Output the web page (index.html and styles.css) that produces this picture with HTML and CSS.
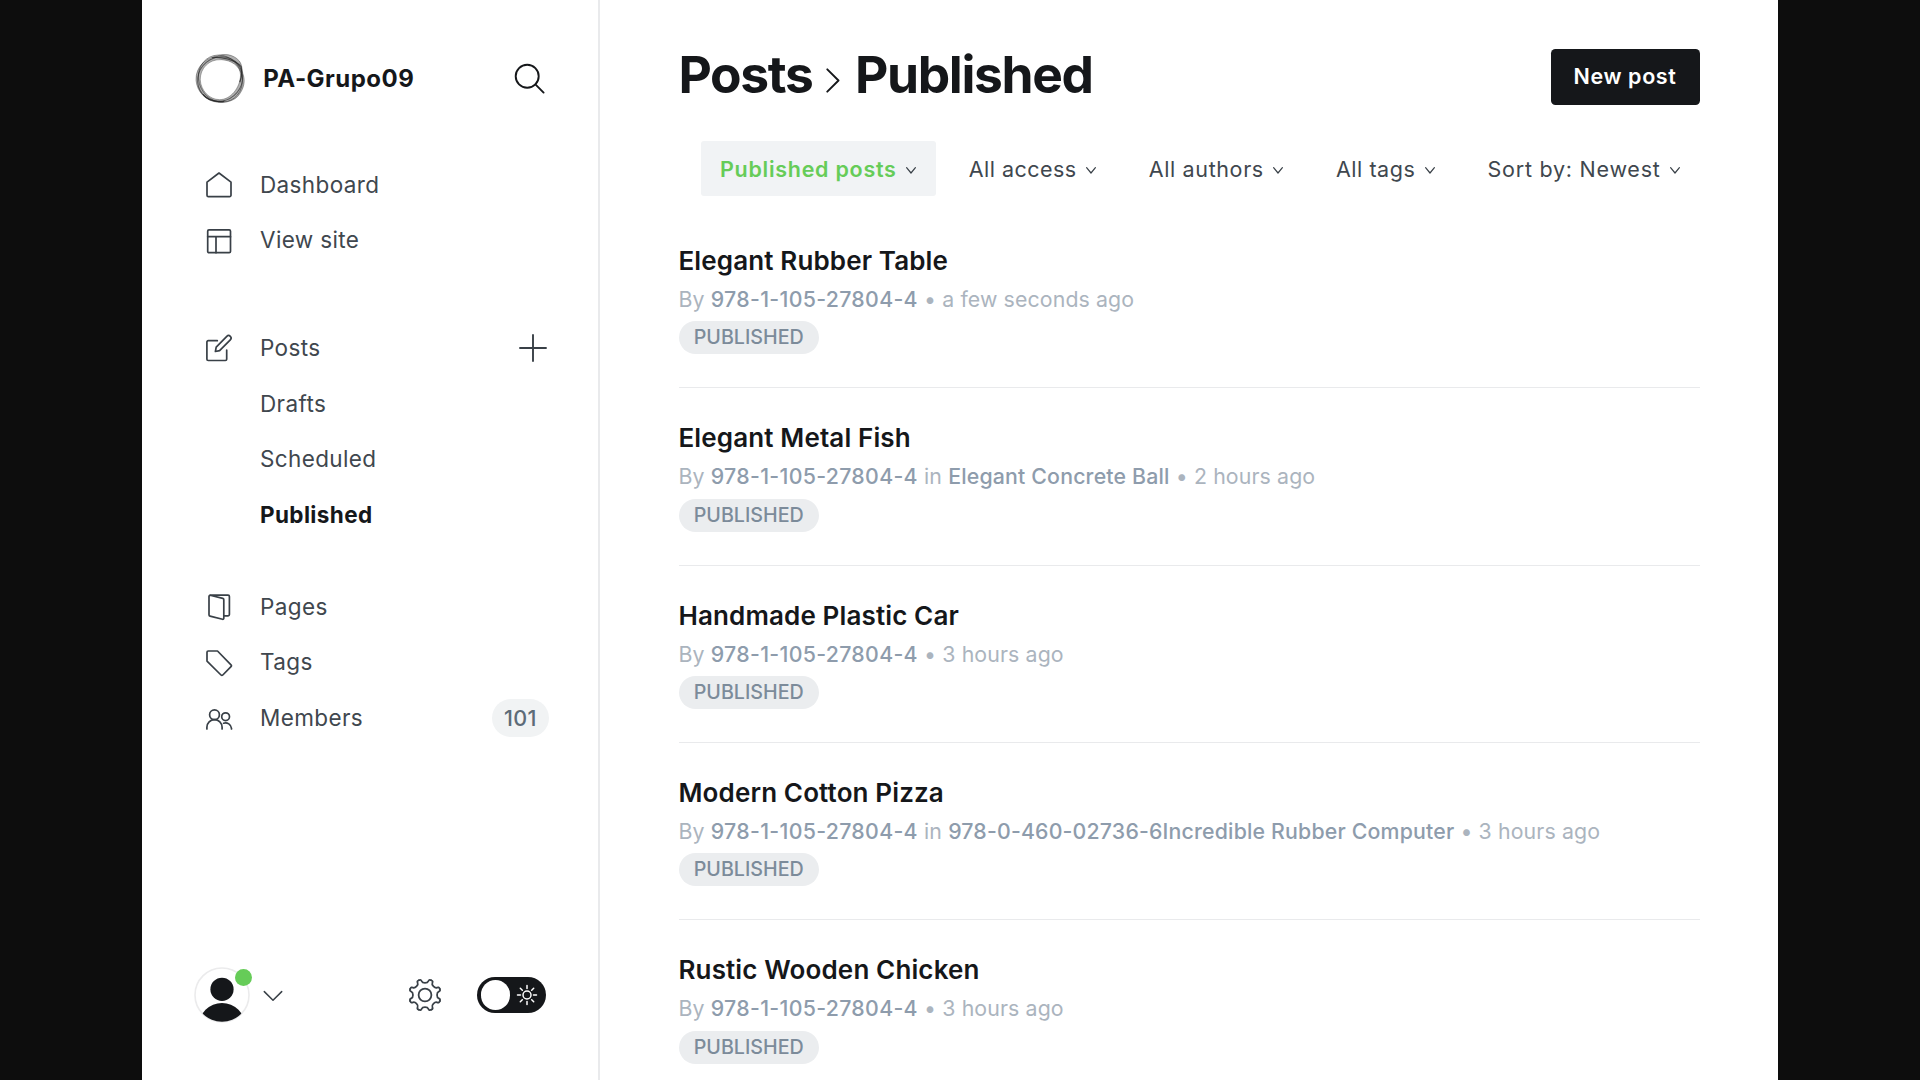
FILE: index.html
```html
<!DOCTYPE html>
<html lang="en">
<head>
<meta charset="utf-8">
<title>Posts - PA-Grupo09</title>
<link rel="stylesheet" href="styles.css">
</head>
<body>
<div class="app">
  <aside class="sidebar">
    <header class="brand">
      <svg class="brand-logo" viewBox="0 0 50 50" fill="none" stroke="#1c1c1c">
        <path fill="#444" fill-opacity=".42" fill-rule="evenodd" stroke-opacity=".5" stroke-width=".7" d="M1 27C.5 13 12 4 22 3C28 .3 38 .8 44 8C47.5 13 46 17 48 22C50.5 30 47 38 42 43.5C37 48.5 28 49.5 22 48.8C11 47.5 2 39 1 27ZM5.200 26.500C5.700 37 14 46.300 24.500 46.300C35 46.300 44.800 35 45.200 22C45.300 13 36 7 26 6.600C14 6 5.200 15 5.200 26.500Z"/>
        <ellipse cx="24.9" cy="25.8" rx="22.9" ry="21.4" transform="rotate(-40 24.900 25.800)" stroke-width="1" stroke-opacity=".6"/>
        <ellipse cx="25.2" cy="25.4" rx="23.8" ry="21.4" transform="rotate(64 25.200 25.400)" stroke-width=".8" stroke-opacity=".55"/>
        <path d="M8 41C13 47.500 20 48.800 29 48M17 4.500C27 3.500 40 7 45.700 13.500C47 19 46 25 44.500 29" stroke-width="1.300" stroke-opacity=".7"/>
      </svg>
      <span class="brand-name">PA-Grupo09</span>
      <svg class="search" viewBox="0 0 32 32" fill="none" stroke="#15171a" stroke-width="1.9" stroke-linecap="round"><circle cx="13.2" cy="13.2" r="11.5"/><path d="M21.4 21.4l8.2 8.2"/></svg>
    </header>

    <nav class="nav">
      <ul class="nav-group">
        <li class="nav-item"><svg class="icon" viewBox="0 0 28 28"><path d="M2 11.2 14 2l12 9.2V24.2a1.4 1.4 0 0 1-1.4 1.4H3.4A1.4 1.4 0 0 1 2 24.2z"/></svg><span>Dashboard</span></li>
        <li class="nav-item"><svg class="icon" viewBox="0 0 28 28"><rect x="2.7" y="2.9" width="22.8" height="22.8" rx="1.3"/><path d="M2.7 9.7h22.8M11 9.7v16"/></svg><span>View site</span></li>
      </ul>
      <ul class="nav-group">
        <li class="nav-item"><svg class="icon" viewBox="0 0 28 28"><path d="M12.3 6.7H3.2A1.3 1.3 0 0 0 1.9 8v17.2a1.3 1.3 0 0 0 1.3 1.3h17.2a1.3 1.3 0 0 0 1.3-1.3v-9.1"/><path d="M14.6 16.7l-4.2.8.8-4.4L21.8 2.3a2.4 2.4 0 0 1 3.5 3.5z"/></svg><span>Posts</span>
          <svg class="plus" viewBox="0 0 28 28"><path d="M14 1v26M1 14h26"/></svg></li>
        <li class="nav-item sub"><span>Drafts</span></li>
        <li class="nav-item sub"><span>Scheduled</span></li>
        <li class="nav-item sub active"><span>Published</span></li>
      </ul>
      <ul class="nav-group">
        <li class="nav-item"><svg class="icon" viewBox="0 0 28 28"><path d="M5.2 2.2 17.8 5.4a1.3 1.3 0 0 1 1 1.3V25.3a1 1 0 0 1-1.3 1L5 23.1a1.3 1.3 0 0 1-1-1.300V3.500a1.300 1.300 0 0 1 1.300-1.300h17.800a1.300 1.300 0 0 1 1.300 1.300v18a1.300 1.300 0 0 1-1.300 1.300h-4.200"/></svg><span>Pages</span></li>
        <li class="nav-item"><svg class="icon" viewBox="0 0 28 28"><path d="M3.2 2h9.3L26 15.8a1.3 1.3 0 0 1 0 1.8L17.8 26a1.3 1.3 0 0 1-1.8 0L2 12.1V3.2A1.2 1.2 0 0 1 3.2 2z"/></svg><span>Tags</span></li>
        <li class="nav-item"><svg class="icon" viewBox="0 0 28 28"><circle cx="9.5" cy="9.7" r="4.9"/><path d="M1.9 24v-1.8a7.6 7.6 0 0 1 15.2 0V24"/><circle cx="20.6" cy="11.7" r="3.9"/><path d="M18.6 18.2a6 6 0 0 1 7.9 5.2V24"/></svg><span>Members</span><span class="count">101</span></li>
      </ul>
    </nav>

    <footer class="sidebar-footer">
      <div class="avatar">
        <svg viewBox="0 0 56 56"><defs><clipPath id="face"><circle cx="28" cy="28" r="26.8"/></clipPath></defs><circle cx="28" cy="28" r="27" fill="#fff" stroke="#ebebec" stroke-width="1.6"/><g clip-path="url(#face)" fill="#15171a"><circle cx="28" cy="22.3" r="11.6"/><circle cx="28" cy="59.3" r="23.3"/></g></svg>
        <i class="status"></i>
      </div>
      <svg class="caret" viewBox="0 0 20 12" fill="none" stroke="#394047" stroke-width="1.5" stroke-linecap="round" stroke-linejoin="round"><path d="M1.3 1.6 10 10.2l8.7-8.6"/></svg>
      <svg class="gear" viewBox="-18 -18 36 36" fill="none" stroke="#394047" stroke-width="1.8" stroke-linecap="round">
        <defs><path id="tooth" d="M-6.12-14.78C-4.4-15.5-3.8-15-3.3-13.7C-2.5-11.5 2.5-11.5 3.3-13.7C3.8-15 4.4-15.5 6.12-14.78"/></defs>
        <use href="#tooth"/><use href="#tooth" transform="rotate(45)"/><use href="#tooth" transform="rotate(90)"/><use href="#tooth" transform="rotate(135)"/><use href="#tooth" transform="rotate(180)"/><use href="#tooth" transform="rotate(225)"/><use href="#tooth" transform="rotate(270)"/><use href="#tooth" transform="rotate(315)"/>
        <circle r="6.4"/>
      </svg>
      <div class="toggle">
        <i class="knob"></i>
        <svg class="sun" viewBox="-11 -11 22 22" fill="none" stroke="#fff" stroke-width="1.5" stroke-linecap="round"><circle r="4"/><path d="M0-9.5v3M0 9.5v-3M-9.5 0h3M9.5 0h-3M-6.7-6.7l2 2M6.7 6.7l-2-2M-6.7 6.7l2-2M6.7-6.7l-2 2"/></svg>
      </div>
    </footer>
  </aside>

  <main class="main">
    <header class="page-header">
      <h1 class="title"><span>Posts</span><svg class="crumb" viewBox="0 0 14 25" fill="none" stroke="#15171a" stroke-width="1.9" stroke-linecap="round" stroke-linejoin="round"><path d="M1.3 1.3 12.5 12.5 1.3 23.7"/></svg><span>Published</span></h1>
      <button class="new-post">New post</button>
    </header>

    <div class="filters">
      <div class="filter selected"><span>Published posts</span><svg viewBox="0 0 10 7"><path d="M.6.7 5 6l4.4-5.3"/></svg></div>
      <div class="filter access"><span>All access</span><svg viewBox="0 0 10 7"><path d="M.6.7 5 6l4.4-5.3"/></svg></div>
      <div class="filter authors"><span>All authors</span><svg viewBox="0 0 10 7"><path d="M.6.7 5 6l4.4-5.3"/></svg></div>
      <div class="filter tags"><span>All tags</span><svg viewBox="0 0 10 7"><path d="M.6.7 5 6l4.4-5.3"/></svg></div>
      <div class="filter sort"><span>Sort by: Newest</span><svg viewBox="0 0 10 7"><path d="M.6.7 5 6l4.4-5.3"/></svg></div>
    </div>

    <ol class="posts">
      <li class="post"><h3>Elegant Rubber Table</h3><p>By <b>978-1-105-27804-4</b> • a few seconds ago</p><span class="badge">PUBLISHED</span></li>
      <li class="post"><h3>Elegant Metal Fish</h3><p>By <b>978-1-105-27804-4</b> in <b class="tag">Elegant Concrete Ball</b> • 2 hours ago</p><span class="badge">PUBLISHED</span></li>
      <li class="post"><h3>Handmade Plastic Car</h3><p>By <b>978-1-105-27804-4</b> • 3 hours ago</p><span class="badge">PUBLISHED</span></li>
      <li class="post"><h3>Modern Cotton Pizza</h3><p>By <b>978-1-105-27804-4</b> in <b class="tag">978-0-460-02736-6Incredible Rubber Computer</b> • 3 hours ago</p><span class="badge">PUBLISHED</span></li>
      <li class="post"><h3>Rustic Wooden Chicken</h3><p>By <b>978-1-105-27804-4</b> • 3 hours ago</p><span class="badge">PUBLISHED</span></li>
    </ol>
  </main>
</div>
</body>
</html>
```
FILE: styles.css
```css
* { box-sizing: border-box; }
html, body { height: 100%; }
body {
  margin: 0;
  background: #0d0d0d;
  color: #15171a;
  font-family: Inter, "Noto Sans", sans-serif;
  overflow: hidden;
}
ul, ol { margin: 0; padding: 0; list-style: none; }
svg { display: block; flex: none; }

.app {
  display: flex;
  width: 1636px;
  height: 1080px;
  margin: 0 auto;
  background: #fff;
  overflow: hidden;
}

/* Sidebar */
.sidebar {
  display: flex;
  flex-direction: column;
  flex: none;
  width: 458px;
  border-right: 2px solid #e9eaec;
}
.brand {
  display: flex;
  align-items: center;
  height: 156.2px;
  padding: 0 53px;
}
.brand-logo { width: 50.4px; height: 50.4px; }
.brand-name {
  flex: 1;
  margin-left: 17.9px;
  font-size: 24px;
  font-weight: 700;
  letter-spacing: .47px;
  line-height: 32px;
  padding-top: 1.4px;
}
.search { width: 32px; height: 32px; margin-right: -1px; margin-top: 1px; }
.nav-group { margin-bottom: 36px; }
.nav-group:first-child { margin-bottom: 52px; }
.nav-item {
  display: flex;
  align-items: center;
  height: 55.7px;
  padding: 0 49px 0 63px;
  color: #40474e;
  font-size: 22.5px;
  letter-spacing: .37px;
}
.nav-item.sub { padding-left: 118px; }
.nav-item.active { color: #15171a; font-weight: 700; }
.icon {
  width: 28px;
  height: 28px;
  margin: 2px 27px 0 0;
  fill: none;
  stroke: #394047;
  stroke-width: 1.7;
  stroke-linecap: round;
  stroke-linejoin: round;
}
.plus {
  width: 28px;
  height: 28px;
  margin: 2px 2px 0 auto;
  fill: none;
  stroke: #394047;
  stroke-width: 1.9;
  stroke-linecap: round;
}
.count {
  width: 57px;
  height: 38px;
  margin-left: auto;
  border-radius: 19px;
  background: #f1f3f4;
  color: #5d6b78;
  font-size: 21.5px;
  font-weight: 500;
  line-height: 38px;
  text-align: center;
}
.sidebar-footer {
  display: flex;
  align-items: center;
  height: 56px;
  margin: auto 52px 57.5px 52px;
}
.avatar { position: relative; width: 56px; height: 56px; }
.avatar svg { width: 56px; height: 56px; }
.status {
  position: absolute;
  top: 2px;
  right: -2px;
  width: 17px;
  height: 17px;
  border-radius: 50%;
  background: #66cc58;
}
.caret { width: 20px; height: 12px; margin: 3px 0 0 13px; }
.gear { width: 36px; height: 36px; margin: 1px 0 0 auto; }
.toggle {
  display: flex;
  align-items: center;
  justify-content: space-between;
  width: 69px;
  height: 36px;
  margin: 1px 0 0 34px;
  padding: 0 8.5px 0 3.5px;
  border-radius: 18px;
  background: #15171a;
}
.knob { width: 29.4px; height: 29.4px; border-radius: 50%; background: #fff; }
.sun { width: 22px; height: 22px; }

/* Content */
.main { flex: 1; padding: 49px 78.5px 0; }
.page-header { display: flex; align-items: center; justify-content: space-between; height: 55.7px; }
.title {
  display: flex;
  align-items: center;
  margin: 0;
  padding-bottom: 5px;
  font-size: 51.5px;
  font-weight: 700;
  letter-spacing: -1.35px;
  line-height: 60px;
}
.crumb { width: 14px; height: 25px; margin: 12px 15px 0 13.5px; }
.new-post {
  width: 149px;
  height: 56px;
  border: 0;
  border-radius: 4.5px;
  background: #15171a;
  color: #fff;
  font: 600 21.5px/54px Inter, sans-serif;
  letter-spacing: .6px;
  padding: 0 0 2px;
}
.filters { display: flex; justify-content: flex-end; gap: 14.2px; margin-top: 36.3px; }
.filter {
  display: flex;
  align-items: center;
  height: 55.3px;
  padding: 1.6px 19.4px 0 19px;
  border-radius: 3px;
  color: #40474e;
  font-size: 21.5px;
}
.filter svg {
  width: 10px;
  height: 7px;
  margin: 2px 0 0 9.6px;
  fill: none;
  stroke: #394047;
  stroke-width: 1.2;
  stroke-linecap: round;
  stroke-linejoin: round;
}
.selected { background: #f1f3f5; letter-spacing: .73px; }
.selected span { color: #66cc58; font-weight: 600; }
.access { letter-spacing: .47px; }
.authors { letter-spacing: .62px; }
.tags { letter-spacing: .54px; }
.sort { letter-spacing: .75px; }

.posts { padding-top: 32.7px; }
.post { height: 177.3px; border-bottom: 1.5px solid #e9eaec; padding-top: 33.5px; }
.post:first-child { height: 159.4px; padding-top: 15px; }
.post h3 { margin: 0; font-size: 26px; font-weight: 600; line-height: 34px; letter-spacing: .13px; }
.post + .post h3 { margin-top: -.6px; }
.post p {
  margin: 2px 0 0;
  color: #abb4be;
  font-size: 21.3px;
  line-height: 38px;
  letter-spacing: .12px;
  white-space: nowrap;
}
.post b { color: #8e9cac; font-weight: 500; letter-spacing: .32px; }
.post .tag { letter-spacing: .18px; }
.badge {
  display: block;
  width: 140.5px;
  height: 33px;
  margin-top: 3.5px;
  border-radius: 17px;
  background: #ebedef;
  color: #7c8b9a;
  font-size: 19.7px;
  font-weight: 500;
  line-height: 33px;
  text-align: center;
}
```
